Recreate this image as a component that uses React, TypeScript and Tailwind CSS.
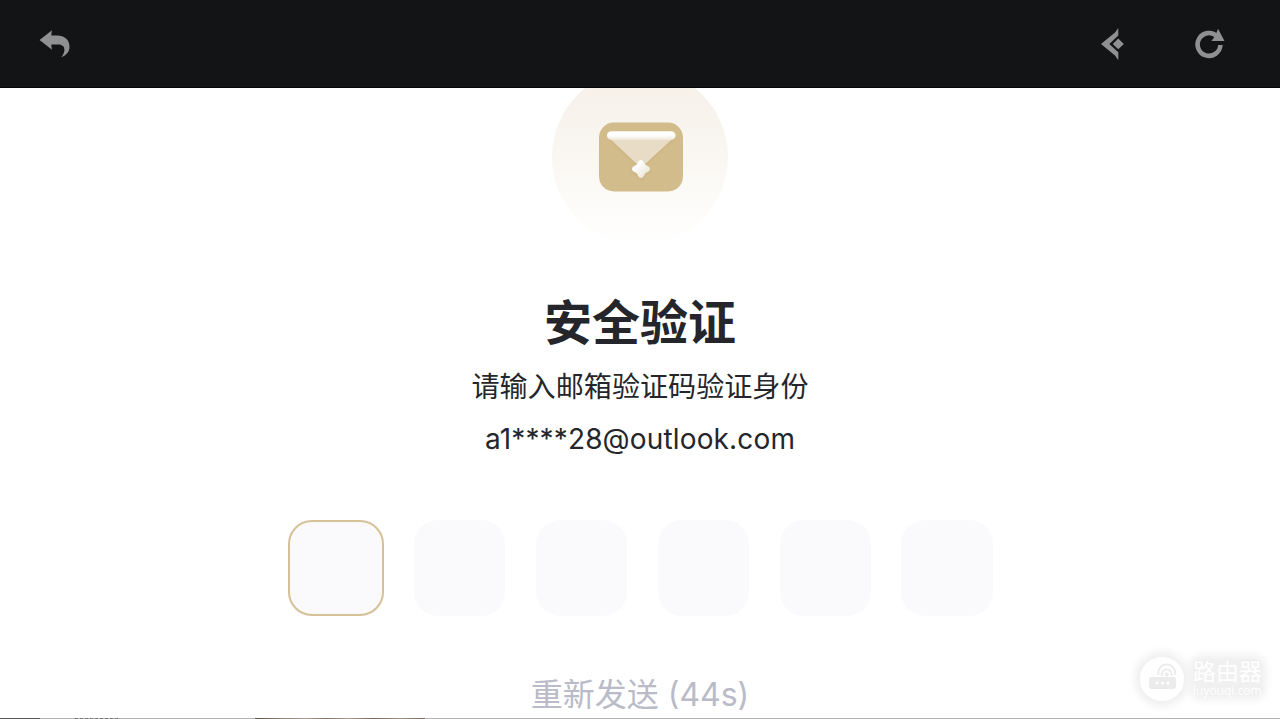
import React from 'react';

const CODE_LENGTH = 6;

const BackIcon = () => (
  <svg width="32" height="30" viewBox="0 0 32 30" fill="#8f9092">
    <path d="M0.5 11 13 1.200C12.500 3.200 12.400 5 12.400 6.500H18C25.500 6.500 30.500 10.500 30.500 18 30.500 23 27 26.500 22.200 28.300 24.800 25 26 22 25.200 19 24.400 16.200 21.500 15.500 18 15.500H12.400C12.400 17 12.500 18.800 13 20.800Z" />
  </svg>
);

const HomeIcon = () => (
  <svg width="24" height="34" viewBox="0 0 24 34" fill="#8f9092">
    <path d="M17.300 1V8.600L8.300 16.900 17.300 25.200V33.200L14 28.500 0 17 14 5.500Z" />
    <path d="M17.300 11.600 22.800 16.900 17.300 22.200 11.800 16.900Z" />
  </svg>
);

const RefreshIcon = () => (
  <svg width="30" height="32" viewBox="0 0 30 32">
    <path d="M22 8.300A11.400 11.400 0 1 0 25.400 17" fill="none" stroke="#8f9092" strokeWidth="4.600" />
    <path d="M23 0.800 29.500 13H16.300L19.500 9 21 6Z" fill="#8f9092" />
  </svg>
);

const EnvelopeIcon = () => (
  <svg width="84" height="70" viewBox="0 0 84 70" className="overflow-visible">
    <defs>
      <linearGradient id="bar" x1="0" y1="0" x2="0" y2="1">
        <stop offset="0.45" stopColor="#fff" />
        <stop offset="1" stopColor="#f1e9dc" />
      </linearGradient>
      <linearGradient id="star" x1="0" y1="0" x2="1" y2="1">
        <stop offset="0.25" stopColor="#fff" />
        <stop offset="1" stopColor="#e9dfcc" />
      </linearGradient>
      <filter id="soft" x="-30%" y="-30%" width="160%" height="160%">
        <feDropShadow dx="0" dy="1" stdDeviation="1.5" floodColor="#ad8d4e" floodOpacity="0.3" />
      </filter>
    </defs>
    <rect y="0.5" width="84" height="69" rx="15" fill="#d3bc8c" />
    <path d="M9 15 39 43Q42 45.5 45 43L75.500 15Z" fill="#e8dcc7" filter="url(#soft)" />
    <rect x="8" y="9.300" width="68.500" height="8.500" rx="4.250" fill="url(#bar)" />
    <path
      d="M42 38C43.800 38 44.600 39.500 45.500 41.300 46.100 42.600 46.400 42.900 47.700 43.500 49.600 44.400 51 45.300 51 47S49.600 49.600 47.700 50.500C46.400 51.100 46.100 51.400 45.500 52.700 44.600 54.500 43.800 56 42 56S39.400 54.500 38.500 52.700C37.900 51.400 37.600 51.100 36.300 50.500 34.400 49.600 33 48.700 33 47S34.400 44.400 36.300 43.500C37.600 42.900 37.900 42.600 38.500 41.300 39.400 39.500 40.200 38 42 38Z"
      fill="url(#star)"
      filter="url(#soft)"
    />
  </svg>
);

const RouterIcon = () => (
  <svg width="44" height="44" viewBox="0 0 44 44">
    <circle cx="22" cy="22" r="22" fill="#fff" />
    <rect x="9" y="20" width="27" height="12" rx="2.500" fill="#ebebeb" />
    <g fill="none" stroke="#ebebeb" strokeWidth="1.800">
      <path d="M18.500 18A8.500 8.500 0 1 1 35 18" />
      <path d="M22 19A5 5 0 1 1 31.500 19" />
    </g>
    <circle cx="26.800" cy="17.500" r="2" fill="#ebebeb" />
    <g fill="#fff">
      <circle cx="17" cy="26" r="1.500" />
      <circle cx="22.500" cy="26" r="1.500" />
      <circle cx="28" cy="26" r="1.500" />
    </g>
  </svg>
);

const Toolbar = () => (
  <header className="relative z-10 flex h-[88px] shrink-0 items-center justify-between border-b border-[#050607] bg-[#121416] pr-[55px] pl-[39px]">
    <button aria-label="返回"><BackIcon /></button>
    <div className="flex items-center gap-[70px]">
      <button aria-label="主页"><HomeIcon /></button>
      <button aria-label="刷新"><RefreshIcon /></button>
    </div>
  </header>
);

const CodeInputs = () => (
  <div className="mt-[63px] ml-px flex gap-[30.400px]">
    {Array.from({ length: CODE_LENGTH }, (_, i) => (
      <div
        key={i}
        className={`h-24 rounded-[24px] bg-[#fafafc] ${i === 0 ? 'w-[95.500px] border-2 border-[#d6c197]' : 'w-[91.500px]'}`}
      />
    ))}
  </div>
);

const Watermark = () => (
  <div className="absolute top-[657px] left-[1140px] flex gap-[9px]">
    <div className="h-11 w-11 rounded-full shadow-[0_0_10px_5px_rgba(0,0,0,0.07)]">
      <RouterIcon />
    </div>
    <div className="mt-0.5 h-[37px] rounded-lg bg-[#f0f0f0] text-white shadow-[0_0_8px_4px_#f0f0f0]">
      <div className="h-[25px] font-['Noto_Sans_CJK_SC',sans-serif] text-[23px] leading-[22px]">路由器</div>
      <div className="font-['Open_Sans',sans-serif] text-[12px] leading-[14px]">luyouqi.com</div>
    </div>
  </div>
);

// Sliver of the next screen showing along the bottom edge
const BottomEdge = () => (
  <div className="absolute bottom-0 left-0 flex h-px w-full bg-[#b2b2b2]">
    <div className="w-10 bg-[#555]" />
    <div className="ml-[35px] w-[44px] bg-[repeating-linear-gradient(90deg,#777_0_3px,#b2b2b2_3px_5px)]" />
    <div className="ml-[136px] w-[170px] bg-[linear-gradient(90deg,#5b5648,#8c8067_15%,#a9a28f_30%,#8b6c67_42%,#aaa08d_55%,#7c6254_70%,#a88f74_85%,#756759)]" />
  </div>
);

export default function App() {
  return (
    <div className="relative flex h-[719px] w-[1280px] flex-col overflow-hidden bg-white font-['Inter','Noto_Sans_CJK_SC',sans-serif] text-[#25262b]">
      <Toolbar />
      <main className="flex flex-1 flex-col items-center">
        <div className="-mt-[19px] flex h-[176px] w-[176px] shrink-0 items-center justify-center rounded-full bg-linear-to-b from-[#f5efe6] to-white pl-0.5">
          <EnvelopeIcon />
        </div>
        <h1 className="mt-[46px] text-[48px] leading-[64px] font-bold">安全验证</h1>
        <p className="mt-[12px] text-[28.100px] leading-[40px]">请输入邮箱验证码验证身份</p>
        <p className="mt-[14px] text-[28px] leading-[36px] tracking-[0.150px]">a1****28@outlook.com</p>
        <CodeInputs />
        <button className="mt-[57px] text-[32px] leading-[44px] whitespace-nowrap text-[#b9bbc8]">重新发送 (44s)</button>
      </main>
      <Watermark />
      <BottomEdge />
    </div>
  );
}
